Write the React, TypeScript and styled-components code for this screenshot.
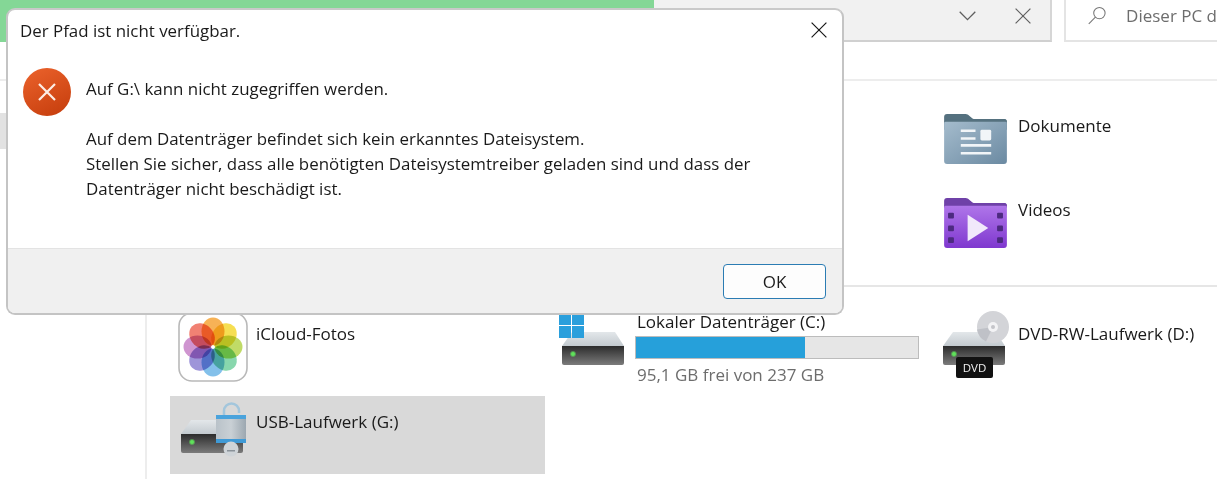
import React, { FC, ReactNode } from 'react';
import styled, { createGlobalStyle } from 'styled-components';

const GlobalStyle = createGlobalStyle`
  html, body {
    margin: 0;
    padding: 0;
    background: #fff;
    overflow: hidden;
  }
  * {
    box-sizing: border-box;
  }
  body {
    font-family: "Open Sans", "Noto Sans", "Liberation Sans", sans-serif;
    color: #1a1a1a;
  }
`;

const Page = styled.div`
  position: relative;
  width: 1217px;
  height: 479px;
  overflow: hidden;
  background: #fff;
`;

const TopBar = styled.div`
  display: flex;
  gap: 12px;
  height: 81px;
  border-bottom: 2px solid #ededed;
`;

const AddressBar = styled.div`
  display: flex;
  flex: 0 0 1052px;
  align-items: flex-start;
  height: 42px;
  background: #f1f1f1;
  border-right: 2px solid #d6d6d6;
  border-bottom: 2px solid #d0d0d0;
`;

const Progress = styled.div`
  width: 654px;
  height: 42px;
  background: #84d796;
  margin-right: auto;
`;

const BarButton = styled.div`
  display: flex;
  align-items: center;
  justify-content: center;
  width: 55px;
  height: 32px;
  color: #5f5f5f;
`;

const SearchBox = styled.div`
  display: flex;
  align-items: center;
  flex: 1;
  min-width: 0;
  height: 42px;
  padding: 0 0 9px 22px;
  gap: 20px;
  border-left: 2px solid #e4e4e4;
  border-bottom: 2px solid #e4e4e4;
  color: #6d6d6d;
  font-size: 17px;
  white-space: nowrap;
`;

const Body = styled.div`
  display: flex;
  height: 398px;
`;

const Sidebar = styled.div`
  flex: 0 0 147px;
  padding-top: 32px;
  border-right: 2px solid #ededed;
`;

const SidebarRow = styled.div<{ $active?: boolean }>`
  height: 36px;
  background: ${(p) => (p.$active ? '#e2e2e2' : 'transparent')};
`;

const Main = styled.div`
  flex: 1;
  min-width: 0;
`;

const Section = styled.div<{ $divided?: boolean; $gap: number; $top: number; $bottom: number }>`
  display: grid;
  grid-template-columns: repeat(3, 375px);
  grid-auto-rows: 78px;
  gap: ${(p) => p.$gap}px 6px;
  padding: ${(p) => p.$top}px 0 ${(p) => p.$bottom}px 23px;
  border-top: ${(p) => (p.$divided ? '2px solid #e6e6e6' : 'none')};
`;

const Tile = styled.div<{ $selected?: boolean; $col?: number }>`
  display: flex;
  grid-column: ${(p) => p.$col ?? 'auto'};
  background: ${(p) => (p.$selected ? '#d9d9d9' : 'transparent')};
`;

const TileIcon = styled.div`
  display: flex;
  align-items: center;
  justify-content: center;
  flex: 0 0 86px;
  height: 78px;
`;

const TileText = styled.div`
  flex: 1;
  padding-top: 15px;
  font-size: 17px;
  line-height: 22px;
  white-space: nowrap;
`;

const FolderText = styled(TileText)`
  padding-top: 16px;
`;

const DriveText = styled(TileText)`
  padding-top: 3px;
`;

const UsageBar = styled.div`
  width: 284px;
  height: 23px;
  margin: 3px 0 0 -2px;
  background: #e6e6e6;
  border: 1px solid #bcbcbc;
`;

const UsageFill = styled.div`
  height: 100%;
  background: #26a0da;
`;

const FreeText = styled.div`
  margin-top: 5px;
  color: #6d6d6d;
`;

/* the message box lies over the explorer window */
const Dialog = styled.div`
  position: absolute;
  left: 6px;
  top: 8px;
  display: flex;
  flex-direction: column;
  width: 838px;
  height: 307px;
  background: #fff;
  border: 2px solid #c4c4c4;
  border-top-color: #c9c9c9;
  border-radius: 9px;
  overflow: hidden;
  font-size: 16.9px;
`;

const DialogHead = styled.div`
  display: flex;
  align-items: center;
  justify-content: space-between;
  height: 40px;
  padding: 0 15px 0 12px;
  color: #1a1a1a;
`;

const DialogContent = styled.div`
  display: flex;
  flex: 1;
  padding: 18px 0 0 15px;
`;

const ErrorSlot = styled.div`
  flex: 0 0 63px;
`;

const Message = styled.div`
  line-height: 25px;
  padding-top: 8px;
`;

const Paragraph = styled.p`
  margin: 0 0 25px;
`;

const DialogFoot = styled.div`
  display: flex;
  align-items: center;
  justify-content: flex-end;
  height: 65px;
  padding-right: 16px;
  background: #f0f0f0;
  border-top: 1px solid #e3e3e3;
`;

const OkButton = styled.button`
  width: 103px;
  height: 35px;
  padding: 0;
  background: #fdfdfd;
  border: 1px solid #2b7cb3;
  border-radius: 4px;
  color: #1a1a1a;
  font: inherit;
  font-size: 17px;
`;

const CloseGlyph: FC<{ size: number; color?: string }> = ({ size, color = 'currentColor' }) => (
  <svg width={size} height={size} viewBox="0 0 16 16" fill="none" stroke={color} strokeWidth="1.2">
    <path d="M.6.6l14.8 14.8M15.4.6L.6 15.4" />
  </svg>
);

const ChevronGlyph = () => (
  <svg width="17" height="10" viewBox="0 0 17 10" fill="none" stroke="#5f5f5f" strokeWidth="1.3">
    <path d="M.7.8l7.8 7.8L16.300.8" />
  </svg>
);

const SearchGlyph = () => (
  <svg width="19" height="19" viewBox="0 0 19 19" fill="none" stroke="#777" strokeWidth="1.1">
    <circle cx="12" cy="7" r="6" />
    <path d="M7.800 11.300L.8 18.400" />
  </svg>
);

const ErrorIcon = () => (
  <svg width="48" height="48" viewBox="0 0 48 48">
    <defs>
      <linearGradient id="errGrad" x1="0.2" y1="0" x2="0.7" y2="1">
        <stop offset="0" stopColor="#e9602a" />
        <stop offset="1" stopColor="#c8400f" />
      </linearGradient>
    </defs>
    <circle cx="24" cy="24" r="24" fill="url(#errGrad)" />
    <path d="M16 16l16 16M32 16L16 32" stroke="#fdeee6" strokeWidth="2.200" fill="none" />
  </svg>
);

const DocsFolder = () => (
  <svg width="63" height="51" viewBox="0 0 64 52">
    <defs>
      <linearGradient id="docBody" x1="0" y1="0" x2="1" y2="1">
        <stop offset="0" stopColor="#a5bccd" />
        <stop offset="1" stopColor="#6b8aa2" />
      </linearGradient>
    </defs>
    <path d="M0 4a3 3 0 013-3h19c3 0 4 3 8 5h31a3 3 0 013 3v8H0z" fill="#55717f" />
    <rect x="0" y="8" width="64" height="44" rx="3" fill="url(#docBody)" />
    <path d="M0 9a3 3 0 013-2h20c5 0 6-1 8-1h30a3 3 0 013 3H0z" fill="#55717f" />
    <path d="M17 18h15M17 26h15M17 33h31M17 41h31" stroke="#f1f5f8" strokeWidth="2.600" />
    <rect x="37" y="17" width="11" height="11" rx="1.500" fill="#f1f5f8" />
  </svg>
);

const VideosFolder = () => (
  <svg width="63" height="51" viewBox="0 0 64 52">
    <defs>
      <linearGradient id="vidBody" x1="0" y1="0" x2="0" y2="1">
        <stop offset="0" stopColor="#b077ea" />
        <stop offset="1" stopColor="#7f38cf" />
      </linearGradient>
    </defs>
    <path d="M0 4a3 3 0 013-3h19c3 0 4 3 8 5h31a3 3 0 013 3v2H0z" fill="#6f41a8" />
    <rect x="0" y="8" width="64" height="44" rx="3" fill="url(#vidBody)" />
    <path d="M0 9a3 3 0 013-2h20c5 0 6-1 8-1h30a3 3 0 013 3H0z" fill="#6f41a8" />
    <g fill="#4c2a80">
      <rect x="4" y="16" width="6" height="6" rx="1" />
      <rect x="4" y="29" width="6" height="6" rx="1" />
      <rect x="4" y="41" width="6" height="6" rx="1" />
      <rect x="54" y="16" width="6" height="6" rx="1" />
      <rect x="54" y="29" width="6" height="6" rx="1" />
      <rect x="54" y="41" width="6" height="6" rx="1" />
    </g>
    <path d="M24 18v27l21-13.500z" fill="#f1e9fb" />
  </svg>
);

const petals = ['#f6a83e', '#f5da3a', '#b8d652', '#78d2a2', '#72b8e8', '#9186d4', '#c986ca', '#f0705f'];

const PhotosIcon = () => (
  <svg width="70" height="70" viewBox="0 0 70 70">
    <rect x="1" y="1" width="68" height="68" rx="13" fill="#fff" stroke="#b9b9b9" strokeWidth="1.600" />
    <g style={{ isolation: 'isolate' }}>
      {petals.map((color, i) => (
        <ellipse
          key={color}
          cx="35"
          cy="19.500"
          rx="11.500"
          ry="14"
          fill={color}
          opacity="0.88"
          transform={`rotate(${i * 45} 35 35)`}
          style={{ mixBlendMode: 'multiply' }}
        />
      ))}
    </g>
    <circle cx="35" cy="35" r="1.800" fill="#fff" />
  </svg>
);

const DriveBase: FC<{ id: string; children?: ReactNode }> = ({ id, children }) => (
  <svg width="70" height="70" viewBox="0 0 70 70" style={{ overflow: 'visible' }}>
    <defs>
      <linearGradient id={`${id}Top`} x1="0" y1="0" x2="0" y2="1">
        <stop offset="0" stopColor="#e3e7ea" />
        <stop offset="1" stopColor="#c3cacf" />
      </linearGradient>
      <linearGradient id={`${id}Front`} x1="0" y1="0" x2="0" y2="1">
        <stop offset="0" stopColor="#2c2c2c" />
        <stop offset="1" stopColor="#7b7b7b" />
      </linearGradient>
      <radialGradient id={`${id}Led`}>
        <stop offset="0.4" stopColor="#5fe25a" />
        <stop offset="1" stopColor="#5fe25a" stopOpacity="0" />
      </radialGradient>
    </defs>
    <path d="M13 20h43l9 14H3z" fill={`url(#${id}Top)`} />
    <path d="M3 34h62v17a2 2 0 01-2 2H5a2 2 0 01-2-2z" fill={`url(#${id}Front)`} />
    <circle cx="14" cy="42" r="3.500" fill={`url(#${id}Led)`} />
    {children}
  </svg>
);

const LocalDiskIcon = () => (
  <DriveBase id="local">
    <g fill="#2a9fdc">
      <rect x="0" y="1" width="12" height="12" />
      <rect x="13" y="1" width="12" height="12" />
      <rect x="0" y="14" width="12" height="12" />
      <rect x="13" y="14" width="12" height="12" />
    </g>
  </DriveBase>
);

const DvdIcon = () => (
  <DriveBase id="dvd">
    <circle cx="53" cy="15" r="16" fill="#d3d4d8" />
    <path d="M53 15L46 29.500a16 16 0 01-9-12z" fill="#bfc1c7" />
    <circle cx="53" cy="15" r="5" fill="#f3f3f5" />
    <circle cx="53" cy="15" r="2" fill="#c4c5c9" />
    <rect x="16" y="45" width="37" height="21" rx="2" fill="#111" />
    <text x="34.500" y="60" textAnchor="middle" fill="#f1f1f1" fontSize="11.500" fontFamily="Open Sans, sans-serif">
      DVD
    </text>
  </DriveBase>
);

const UsbIcon = () => (
  <DriveBase id="usb">
    <defs>
      <linearGradient id="lockGrad" x1="0" y1="0" x2="1" y2="0">
        <stop offset="0" stopColor="#b9c2c9" />
        <stop offset="0.5" stopColor="#c9d0d5" />
        <stop offset="1" stopColor="#9ca7b0" />
      </linearGradient>
    </defs>
    <path d="M46 16V11a7.500 7.500 0 0115 0v2" fill="none" stroke="#a3c6dc" strokeWidth="2.500" />
    <rect x="38" y="15" width="30" height="28" rx="2" fill="url(#lockGrad)" />
    <rect x="38" y="15" width="30" height="4" fill="#4aa3dc" />
    <rect x="38" y="39" width="30" height="4" fill="#3f9ad6" />
    <circle cx="53" cy="49" r="7.500" fill="#cfd4d8" />
    <rect x="49" y="50" width="8" height="1.500" fill="#8a9299" />
  </DriveBase>
);

export default function App() {
  return (
    <Page>
      <GlobalStyle />
      <TopBar>
        <AddressBar>
          <Progress />
          <BarButton>
            <ChevronGlyph />
          </BarButton>
          <BarButton>
            <CloseGlyph size={16} color="#5f5f5f" />
          </BarButton>
        </AddressBar>
        <SearchBox>
          <SearchGlyph />
          Dieser PC d
        </SearchBox>
      </TopBar>
      <Body>
        <Sidebar>
          <SidebarRow $active />
        </Sidebar>
        <Main>
          <Section $gap={6} $top={18} $bottom={24}>
            <Tile $col={3}>
              <TileIcon>
                <DocsFolder />
              </TileIcon>
              <FolderText>Dokumente</FolderText>
            </Tile>
            <Tile $col={3}>
              <TileIcon>
                <VideosFolder />
              </TileIcon>
              <FolderText>Videos</FolderText>
            </Tile>
          </Section>
          <Section $divided $gap={10} $top={21} $bottom={0}>
            <Tile>
              <TileIcon>
                <PhotosIcon />
              </TileIcon>
              <TileText>iCloud-Fotos</TileText>
            </Tile>
            <Tile>
              <TileIcon>
                <LocalDiskIcon />
              </TileIcon>
              <DriveText>
                Lokaler Datenträger (C:)
                <UsageBar>
                  <UsageFill style={{ width: `${((237 - 95.1) / 237) * 100}%` }} />
                </UsageBar>
                <FreeText>95,1 GB frei von 237 GB</FreeText>
              </DriveText>
            </Tile>
            <Tile>
              <TileIcon>
                <DvdIcon />
              </TileIcon>
              <TileText>DVD-RW-Laufwerk (D:)</TileText>
            </Tile>
            <Tile $selected>
              <TileIcon>
                <UsbIcon />
              </TileIcon>
              <TileText>USB-Laufwerk (G:)</TileText>
            </Tile>
          </Section>
        </Main>
      </Body>
      <Dialog>
        <DialogHead>
          Der Pfad ist nicht verfügbar.
          <CloseGlyph size={16} color="#1a1a1a" />
        </DialogHead>
        <DialogContent>
          <ErrorSlot>
            <ErrorIcon />
          </ErrorSlot>
          <Message>
            <Paragraph>Auf G:\ kann nicht zugegriffen werden.</Paragraph>
            Auf dem Datenträger befindet sich kein erkanntes Dateisystem.
            <br />
            Stellen Sie sicher, dass alle benötigten Dateisystemtreiber geladen sind und dass der
            <br />
            Datenträger nicht beschädigt ist.
          </Message>
        </DialogContent>
        <DialogFoot>
          <OkButton>OK</OkButton>
        </DialogFoot>
      </Dialog>
    </Page>
  );
}
